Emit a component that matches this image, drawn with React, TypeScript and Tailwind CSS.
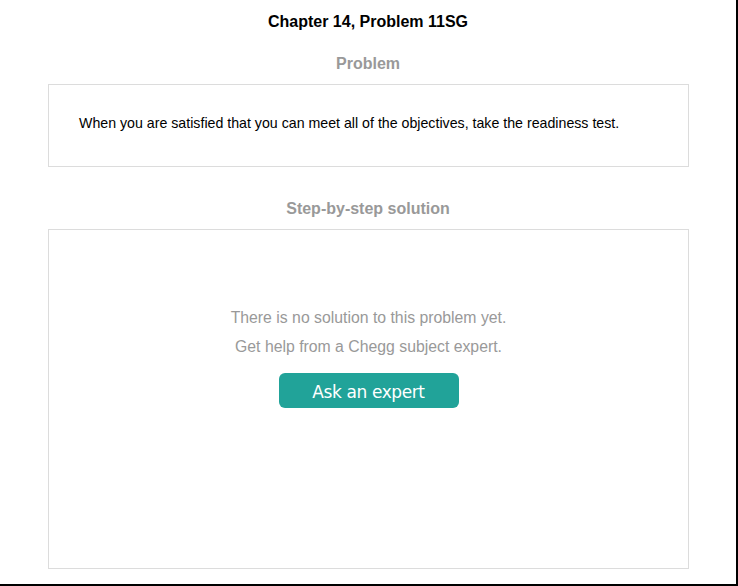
export default function App() {
  return (
    <div className="w-[738px] h-[586px] bg-white border-r-2 border-b-2 border-black font-['Liberation_Sans',Arial,sans-serif]">
      <h1 className="pt-[12px] text-center text-[16px] leading-5 font-bold text-black">
        Chapter 14, Problem 11SG
      </h1>

      <h2 className="mt-[22px] text-center text-[16px] leading-5 font-bold text-[#999]">Problem</h2>
      <div className="ml-[48px] mt-[10px] w-[641px] h-[83px] border border-[#dcdcdc] flex items-center px-[30px] pb-[5px]">
        <p className="text-[14.2px] leading-5 text-black">
          When you are satisfied that you can meet all of the objectives, take the readiness test.
        </p>
      </div>

      <h2 className="mt-[32px] text-center text-[16px] leading-5 font-bold text-[#999]">
        Step-by-step solution
      </h2>
      <div className="ml-[48px] mt-[10px] w-[641px] h-[340px] border border-[#dcdcdc] flex flex-col items-center pt-[78px]">
        <p className="text-[15.8px] leading-5 text-[#999]">There is no solution to this problem yet.</p>
        <p className="mt-[9px] text-[15.8px] leading-5 text-[#999]">Get help from a Chegg subject expert.</p>
        <button className="mt-[16px] w-[180px] h-[35px] pt-[5px] rounded-[6px] bg-[#21a399] text-white text-[17px] font-['DejaVu_Sans',Verdana,sans-serif] tracking-[-0.4px]">
          Ask an expert
        </button>
      </div>
    </div>
  );
}
